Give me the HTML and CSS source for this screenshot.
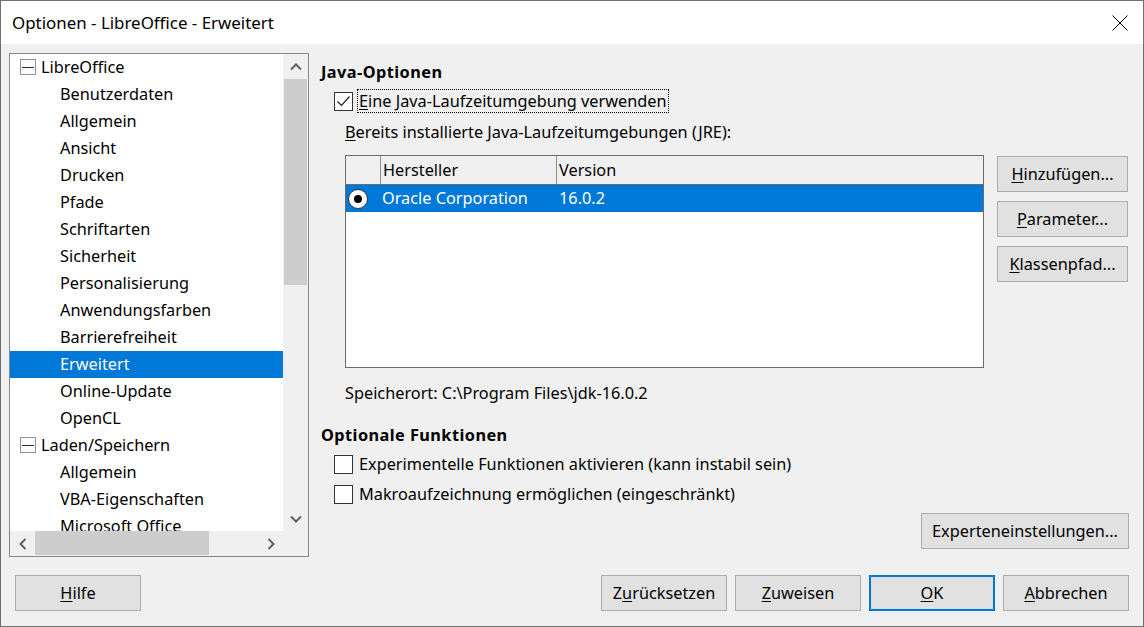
FILE: index.html
```html
<!DOCTYPE html>
<html lang="de">
<head>
<meta charset="utf-8">
<title>Optionen - LibreOffice - Erweitert</title>
<link rel="stylesheet" href="styles.css">
</head>
<body>
<div class="window">
  <div class="titlebar">
    <span class="title">Optionen - LibreOffice - Erweitert</span>
    <svg class="close" viewBox="0 0 16 16" width="16" height="16"><path d="M0.5 0.5L15.5 15.5M15.5 0.5L0.5 15.5" stroke="#000" stroke-width="1" fill="none"/></svg>
  </div>
  <div class="main">
    <div class="tree-panel">
      <div class="tree-list">
        <div class="row parent"><span class="expander"><span class="minus"></span></span>LibreOffice</div>
        <div class="row child">Benutzerdaten</div>
        <div class="row child">Allgemein</div>
        <div class="row child">Ansicht</div>
        <div class="row child">Drucken</div>
        <div class="row child">Pfade</div>
        <div class="row child">Schriftarten</div>
        <div class="row child">Sicherheit</div>
        <div class="row child">Personalisierung</div>
        <div class="row child">Anwendungsfarben</div>
        <div class="row child">Barrierefreiheit</div>
        <div class="row child selected">Erweitert</div>
        <div class="row child">Online-Update</div>
        <div class="row child">OpenCL</div>
        <div class="row parent"><span class="expander"><span class="minus"></span></span>Laden/Speichern</div>
        <div class="row child">Allgemein</div>
        <div class="row child">VBA-Eigenschaften</div>
        <div class="row child">Microsoft Office</div>
        <div class="row child">HTML-Kompatibilität</div>
      </div>
      <div class="vscroll">
        <div class="sb-btn"><svg viewBox="0 0 12 8" width="12" height="8"><path d="M1 6.5L6 1.5L11 6.5" stroke="#606060" stroke-width="2" fill="none"/></svg></div>
        <div class="vthumb"></div>
        <div class="vtrack"></div>
        <div class="sb-btn"><svg viewBox="0 0 12 8" width="12" height="8"><path d="M1 1.5L6 6.5L11 1.5" stroke="#606060" stroke-width="2" fill="none"/></svg></div>
      </div>
      <div class="hscroll">
        <div class="hbtn"><svg viewBox="0 0 8 12" width="8" height="12"><path d="M6.5 1L1.5 6L6.5 11" stroke="#606060" stroke-width="2" fill="none"/></svg></div>
        <div class="hthumb"></div>
        <div class="htrack"></div>
        <div class="hbtn"><svg viewBox="0 0 8 12" width="8" height="12"><path d="M1.5 1L6.5 6L1.5 11" stroke="#606060" stroke-width="2" fill="none"/></svg></div>
      </div>
      <div class="corner"></div>
    </div>

    <div class="content">
      <div class="heading h-java">Java-Optionen</div>
      <div class="check-row cr-java">
        <span class="cb"><svg viewBox="0 0 17 17" width="17" height="17"><path d="M2.5 8.5L6.5 12.5L14.5 3.5" stroke="#222" stroke-width="1.2" fill="none"/></svg></span>
        <span class="cb-label focus"><u>E</u>ine Java-Laufzeitumgebung verwenden</span>
      </div>
      <div class="indent-text t-jre"><u>B</u>ereits installierte Java-Laufzeitumgebungen (JRE):</div>
      <div class="table-area">
        <div class="jre-table">
          <div class="thead">
            <div class="c1"></div>
            <div class="c2">Hersteller</div>
            <div class="c3">Version</div>
          </div>
          <div class="trow selected">
            <div class="c1"><span class="radio"><span class="dot"></span></span></div>
            <div class="c2">Oracle Corporation</div>
            <div class="c3">16.0.2</div>
          </div>
        </div>
        <div class="side-buttons">
          <div class="btn side"><span><u>H</u>inzufügen...</span></div>
          <div class="btn side"><span><u>P</u>arameter...</span></div>
          <div class="btn side"><span><u>K</u>lassenpfad...</span></div>
        </div>
      </div>
      <div class="indent-text t-loc">Speicherort: C:\Program Files\jdk-16.0.2</div>
      <div class="heading h-opt">Optionale Funktionen</div>
      <div class="check-row cr-exp">
        <span class="cb"></span>
        <span class="cb-label">Experimentelle Funktionen aktivieren (kann instabil sein)</span>
      </div>
      <div class="check-row cr-macro">
        <span class="cb"></span>
        <span class="cb-label">Makroaufzeichnung ermöglichen (eingeschränkt)</span>
      </div>
      <div class="btn expert"><span>Experteneinstellungen...</span></div>
    </div>
  </div>

  <div class="footer">
    <div class="btn foot help"><span><u>H</u>ilfe</span></div>
    <div class="btn foot"><span>Z<u>u</u>rücksetzen</span></div>
    <div class="btn foot"><span><u>Z</u>uweisen</span></div>
    <div class="btn foot default"><span><u>O</u>K</span></div>
    <div class="btn foot"><span><u>A</u>bbrechen</span></div>
  </div>
</div>
</body>
</html>
```

FILE: styles.css
```css
* { box-sizing: border-box; }
html, body { margin: 0; padding: 0; }
body {
  font-family: "Noto Sans", "Open Sans", sans-serif;
  font-size: 16.3px;
  color: #000;
  background: #f0f0f0;
}
u { text-decoration: underline; text-underline-offset: 2px; text-decoration-thickness: 1px; }

.window {
  width: 1144px;
  height: 627px;
  border: 1px solid #707070;
  background: #f0f0f0;
  display: flex;
  flex-direction: column;
  overflow: hidden;
}

.titlebar {
  height: 43px;
  flex-shrink: 0;
  background: #fff;
  display: flex;
  align-items: center;
  justify-content: space-between;
  padding: 0 15px 0 11px;
}
.title { font-size: 16.9px; }
.close { display: block; }

.main {
  display: flex;
  height: 513px;
  padding: 9px 0 0 8px;
  flex-shrink: 0;
}

/* tree */
.tree-panel {
  width: 300px;
  height: 504px;
  border: 1px solid #828790;
  background: #fff;
  display: grid;
  grid-template-columns: 273px 25px;
  grid-template-rows: 477px 25px;
  flex-shrink: 0;
}
.tree-list { overflow: hidden; background: #fff; }
.row { height: 27px; line-height: 27px; white-space: nowrap; }
.row.child { padding-left: 50px; }
.row.parent { padding-left: 10px; display: flex; align-items: center; }
.row.selected { background: #0078d7; color: #fff; }
.expander {
  width: 16px;
  height: 16px;
  border: 1px solid #919191;
  background: #fcfcfc;
  margin-right: 5px;
  display: flex;
  align-items: center;
  justify-content: center;
  margin-top: -1px;
}
.minus { width: 12px; height: 1px; background: #1c2f4d; }

.vscroll { background: #f0f0f0; display: flex; flex-direction: column; }
.sb-btn { height: 25px; display: flex; align-items: center; justify-content: center; flex-shrink: 0; }
.sb-btn svg { display: block; }
.vthumb { height: 206px; background: #cdcdcd; margin: 0 1px; flex-shrink: 0; }
.vtrack { flex: 1; }

.hscroll { background: #f0f0f0; display: flex; }
.hbtn { width: 25px; display: flex; align-items: center; justify-content: center; flex-shrink: 0; }
.hbtn svg { display: block; }
.hthumb { width: 174px; background: #cdcdcd; margin: 0 0 1px 0; flex-shrink: 0; }
.htrack { flex: 1; }
.corner { background: #f0f0f0; }

/* content */
.content {
  flex: 1;
  margin-left: 12px;
  margin-right: 14px;
  display: flex;
  flex-direction: column;
}
.heading { font-weight: bold; height: 24px; line-height: 24px; letter-spacing: 0.45px; }
.h-java { margin-top: 7px; }
.h-opt { margin-top: 18px; }

.check-row { display: flex; align-items: center; height: 24px; margin-left: 13px; }
.cr-java { margin-top: 5px; }
.cr-exp { margin-top: 5px; }
.cr-macro { margin-top: 6px; }
.cb {
  width: 19px;
  height: 19px;
  border: 1px solid #333;
  background: #fff;
  display: block;
  flex-shrink: 0;
}
.cb svg { display: block; }
.cb-label { margin-left: 6px; line-height: 22px; }
.cb-label.focus {
  margin-left: 4px;
  padding: 0 1px;
  border: 1px dotted #000;
  height: 24px;
}

.indent-text { margin-left: 24px; height: 24px; line-height: 24px; }
.t-jre { margin-top: 7px; }
.t-loc { margin-top: 13px; }

.table-area { display: flex; margin-top: 11px; }
.jre-table {
  margin-left: 24px;
  width: 639px;
  height: 213px;
  border: 1px solid #6b6b6b;
  background: #fff;
}
.thead { display: flex; height: 29px; background: #f0f0f0; border-bottom: 1px solid #6b6b6b; line-height: 28px; }
.thead .c1 { width: 35px; border-right: 1px solid #8c8c8c; }
.thead .c2 { width: 176px; border-right: 1px solid #8c8c8c; padding-left: 2px; }
.thead .c3 { flex: 1; padding-left: 2px; }
.trow { display: flex; height: 27px; line-height: 27px; }
.trow.selected { background: #0078d7; color: #fff; }
.trow .c1 { width: 35px; display: flex; align-items: center; padding-left: 2px; }
.trow .c2 { width: 176px; padding-left: 1px; }
.trow .c3 { flex: 1; padding-left: 2px; }
.radio {
  width: 20px;
  height: 20px;
  border-radius: 50%;
  background: #fff;
  border: 1px solid #333;
  display: flex;
  align-items: center;
  justify-content: center;
}
.dot { width: 8px; height: 8px; border-radius: 50%; background: #000; }

.side-buttons { margin-left: 13px; margin-top: 1px; display: flex; flex-direction: column; gap: 9px; }

.btn {
  height: 36px;
  border: 1px solid #adadad;
  background: #e1e1e1;
  display: flex;
  align-items: center;
  justify-content: center;
  white-space: nowrap;
  flex-shrink: 0;
}
.btn.side { width: 131px; }
.btn.expert { width: 208px; align-self: flex-end; margin-top: 7px; }

.footer {
  display: flex;
  gap: 8px;
  padding: 18px 14px 0 14px;
}
.btn.foot { width: 126px; }
.btn.help { margin-right: auto; }
.btn.default { border: 2px solid #0078d7; }
```
